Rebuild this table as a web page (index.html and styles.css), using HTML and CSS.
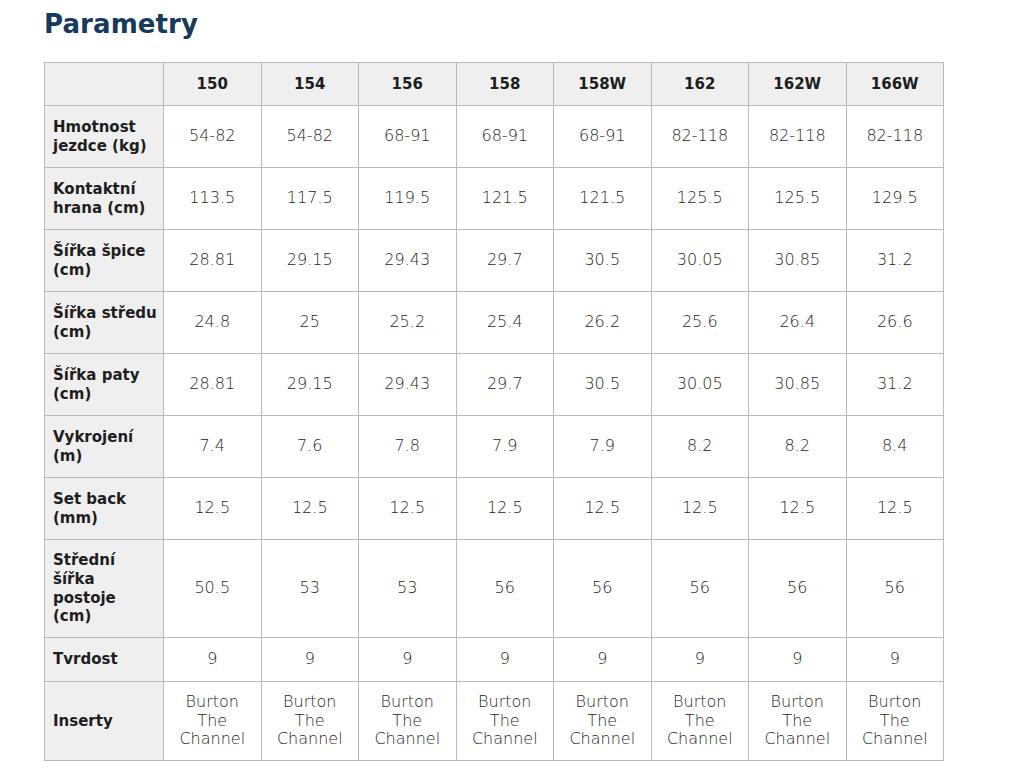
FILE: index.html
```html
<!DOCTYPE html>
<html lang="cs">
<head>
<meta charset="utf-8">
<title>Parametry</title>
<link rel="stylesheet" href="styles.css">
</head>
<body>
<h2 class="title">Parametry</h2>
<table class="params">
  <colgroup>
    <col class="c-label"><col class="c-val"><col class="c-val"><col class="c-val"><col class="c-val"><col class="c-val"><col class="c-val"><col class="c-val"><col class="c-val">
  </colgroup>
  <thead>
    <tr class="r-head"><th class="lab"></th><th>150</th><th>154</th><th>156</th><th>158</th><th>158W</th><th>162</th><th>162W</th><th>166W</th></tr>
  </thead>
  <tbody>
    <tr class="r2"><th class="lab">Hmotnost jezdce (kg)</th><td>54-82</td><td>54-82</td><td>68-91</td><td>68-91</td><td>68-91</td><td>82-118</td><td>82-118</td><td>82-118</td></tr>
    <tr class="r2"><th class="lab">Kontaktní hrana (cm)</th><td>113.5</td><td>117.5</td><td>119.5</td><td>121.5</td><td>121.5</td><td>125.5</td><td>125.5</td><td>129.5</td></tr>
    <tr class="r2"><th class="lab">Šířka špice (cm)</th><td>28.81</td><td>29.15</td><td>29.43</td><td>29.7</td><td>30.5</td><td>30.05</td><td>30.85</td><td>31.2</td></tr>
    <tr class="r2"><th class="lab">Šířka středu (cm)</th><td>24.8</td><td>25</td><td>25.2</td><td>25.4</td><td>26.2</td><td>25.6</td><td>26.4</td><td>26.6</td></tr>
    <tr class="r2"><th class="lab">Šířka paty (cm)</th><td>28.81</td><td>29.15</td><td>29.43</td><td>29.7</td><td>30.5</td><td>30.05</td><td>30.85</td><td>31.2</td></tr>
    <tr class="r2"><th class="lab">Vykrojení (m)</th><td>7.4</td><td>7.6</td><td>7.8</td><td>7.9</td><td>7.9</td><td>8.2</td><td>8.2</td><td>8.4</td></tr>
    <tr class="r2"><th class="lab">Set back (mm)</th><td>12.5</td><td>12.5</td><td>12.5</td><td>12.5</td><td>12.5</td><td>12.5</td><td>12.5</td><td>12.5</td></tr>
    <tr class="r4"><th class="lab tight">Střední šířka postoje (cm)</th><td>50.5</td><td>53</td><td>53</td><td>56</td><td>56</td><td>56</td><td>56</td><td>56</td></tr>
    <tr class="r1"><th class="lab">Tvrdost</th><td>9</td><td>9</td><td>9</td><td>9</td><td>9</td><td>9</td><td>9</td><td>9</td></tr>
    <tr class="r3"><th class="lab">Inserty</th><td>Burton The Channel</td><td>Burton The Channel</td><td>Burton The Channel</td><td>Burton The Channel</td><td>Burton The Channel</td><td>Burton The Channel</td><td>Burton The Channel</td><td>Burton The Channel</td></tr>
  </tbody>
</table>
</body>
</html>
```
FILE: styles.css
```css
html, body {
  margin: 0;
  padding: 0;
  background: #ffffff;
}
body {
  padding: 0 0 0 44px;
  font-family: "DejaVu Sans", "Noto Sans", sans-serif;
  color: #222222;
}
.title {
  margin: 0;
  padding-top: 7px;
  height: 62px;
  box-sizing: border-box;
  font-size: 26px;
  line-height: 34px;
  font-weight: 700;
  color: #183a5c;
  letter-spacing: 0.1px;
}
.params {
  border-collapse: collapse;
  table-layout: fixed;
  width: 899px;
  font-size: 15px;
  line-height: 18.7px;
}
.c-label { width: 119px; }
.c-val { width: 97.5px; }
.params th, .params td {
  border: 1px solid #b9b9b9;
  padding: 0 8px;
  vertical-align: middle;
  text-align: center;
}
.params th {
  font-weight: 700;
  color: #1e1e1e;
}
.params td {
  font-size: 16px;
  font-weight: 200;
  color: #262626;
}
.params .lab {
  text-align: left;
  padding-left: 8px;
  padding-right: 1px;
  background: #efefef;
}
.params .lab.tight {
  padding-right: 16px;
}
.r-head th { background: #efefef; height: 42px; }
.r2 th, .r2 td { height: 61px; }
.r4 th, .r4 td { height: 97px; }
.r1 th, .r1 td { height: 43px; }
.r3 th, .r3 td { height: 78px; }
```
